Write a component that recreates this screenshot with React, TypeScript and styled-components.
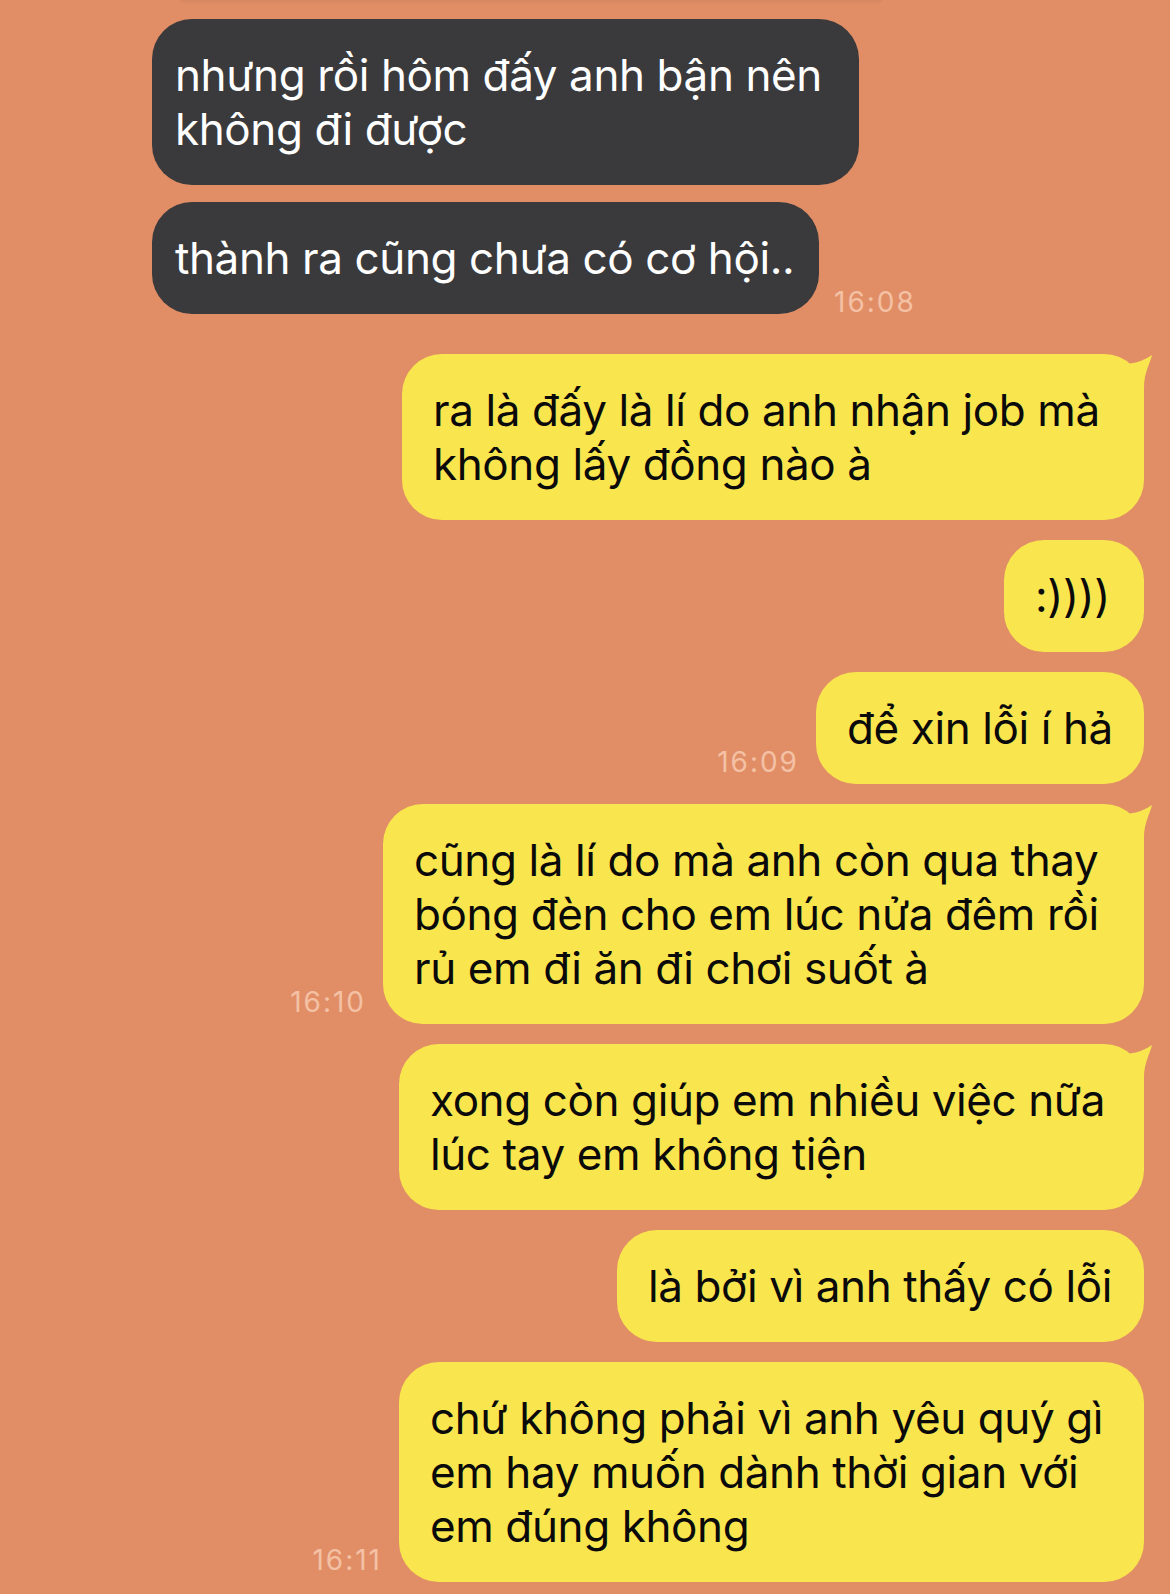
import React from 'react';
import styled, { createGlobalStyle } from 'styled-components';

const GlobalStyle = createGlobalStyle`
  html, body {
    margin: 0;
    padding: 0;
    background: #e18e66;
  }
  body {
    font-family: Inter, "Noto Sans", sans-serif;
    -webkit-font-smoothing: antialiased;
  }
`;

const Thread = styled.main`
  display: flex;
  flex-direction: column;
  width: 1170px;
  min-height: 1594px;
  box-sizing: border-box;
`;

// bottom edge of the message above, cut off by the top of the screen
const CutOffEdge = styled.div`
  height: 5px;
  margin: 0 288px 0 180px;
  border-radius: 0 0 30px 30px;
  background: linear-gradient(rgba(110, 50, 20, 0.09), rgba(110, 50, 20, 0));
`;

interface RowProps {
  $mine: boolean;
  $gap: number;
}

const Row = styled.div<RowProps>`
  display: flex;
  align-items: flex-end;
  justify-content: ${(p) => (p.$mine ? 'flex-end' : 'flex-start')};
  gap: ${(p) => (p.$mine ? 17 : 15)}px;
  margin-top: ${(p) => p.$gap}px;
  padding: ${(p) => (p.$mine ? '0 26px 0 0' : '0 0 0 152px')};
`;

interface BubbleProps {
  $mine: boolean;
  $width: number;
}

const Bubble = styled.div<BubbleProps>`
  position: relative;
  box-sizing: border-box;
  width: ${(p) => p.$width}px;
  padding: 29px ${(p) => (p.$mine ? 31 : 23)}px;
  border-radius: 40px;
  background: ${(p) => (p.$mine ? '#f9e54e' : '#3a3a3c')};
  color: ${(p) => (p.$mine ? '#0a0a0a' : '#ffffff')};
  font-size: 44px;
  line-height: 54px;
  letter-spacing: -0.4px;
  white-space: nowrap;
`;

const Tail = styled.svg`
  position: absolute;
  top: 0;
  right: -10px;
  width: 24px;
  height: 44px;
  fill: #f9e54e;
`;

const Time = styled.span<{ $mine: boolean }>`
  font-size: 28px;
  line-height: 28px;
  letter-spacing: 2px;
  color: #f4c1a5;
  margin-bottom: ${(p) => (p.$mine ? 8 : -2)}px;
`;

interface Message {
  mine: boolean;
  gap: number;
  width: number;
  lines: string[];
  time?: string;
  tail?: boolean;
}

const messages: Message[] = [
  { mine: false, gap: 14, width: 707, lines: ['nhưng rồi hôm đấy anh bận nên', 'không đi được'] },
  { mine: false, gap: 17, width: 667, lines: ['thành ra cũng chưa có cơ hội..'], time: '16:08' },
  { mine: true, gap: 40, width: 742, tail: true, lines: ['ra là đấy là lí do anh nhận job mà', 'không lấy đồng nào à'] },
  { mine: true, gap: 20, width: 140, lines: [':))))'] },
  { mine: true, gap: 20, width: 328, lines: ['để xin lỗi í hả'], time: '16:09' },
  {
    mine: true,
    gap: 20,
    width: 761,
    tail: true,
    lines: ['cũng là lí do mà anh còn qua thay', 'bóng đèn cho em lúc nửa đêm rồi', 'rủ em đi ăn đi chơi suốt à'],
    time: '16:10',
  },
  { mine: true, gap: 20, width: 745, tail: true, lines: ['xong còn giúp em nhiều việc nữa', 'lúc tay em không tiện'] },
  { mine: true, gap: 20, width: 527, lines: ['là bởi vì anh thấy có lỗi'] },
  {
    mine: true,
    gap: 20,
    width: 745,
    lines: ['chứ không phải vì anh yêu quý gì', 'em hay muốn dành thời gian với', 'em đúng không'],
    time: '16:11',
  },
];

function BubbleTail() {
  return (
    <Tail viewBox="0 0 24 44">
      <path d="M0 9.6 Q12 8 22 1 C20 10 14 18 14 34 L14 44 L0 44 Z" />
    </Tail>
  );
}

function App() {
  return (
    <>
      <GlobalStyle />
      <Thread>
        <CutOffEdge />
        {messages.map((m, i) => {
          const time = m.time ? <Time $mine={m.mine}>{m.time}</Time> : null;
          return (
            <Row key={i} $mine={m.mine} $gap={m.gap}>
              {m.mine && time}
              <Bubble $mine={m.mine} $width={m.width}>
                {m.tail && <BubbleTail />}
                {m.lines.map((line, j) => (
                  <div key={j}>{line}</div>
                ))}
              </Bubble>
              {!m.mine && time}
            </Row>
          );
        })}
      </Thread>
    </>
  );
}

export default App;
